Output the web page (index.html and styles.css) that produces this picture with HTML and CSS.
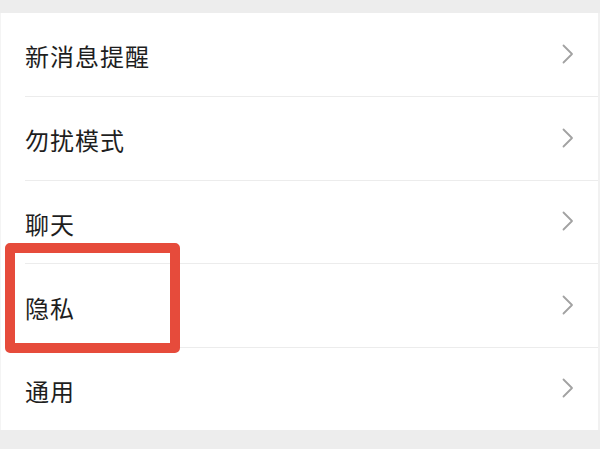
FILE: index.html
```html
<!DOCTYPE html>
<html lang="zh">
<head>
<meta charset="utf-8">
<link rel="stylesheet" href="styles.css">
</head>
<body>
<div class="page">
  <div class="list">
    <div class="row"><span class="label">新消息提醒</span><svg class="chev" viewBox="0 0 12 20"><path d="M1.5 1.5 L10 10 L1.5 18.5"/></svg></div>
    <div class="row"><span class="label">勿扰模式</span><svg class="chev" viewBox="0 0 12 20"><path d="M1.5 1.5 L10 10 L1.5 18.5"/></svg></div>
    <div class="row"><span class="label">聊天</span><svg class="chev" viewBox="0 0 12 20"><path d="M1.5 1.5 L10 10 L1.5 18.5"/></svg></div>
    <div class="row"><span class="label">隐私</span><svg class="chev" viewBox="0 0 12 20"><path d="M1.5 1.5 L10 10 L1.5 18.5"/></svg></div>
    <div class="row last"><span class="label">通用</span><svg class="chev" viewBox="0 0 12 20"><path d="M1.5 1.5 L10 10 L1.5 18.5"/></svg></div>
  </div>
  <div class="highlight"></div>
</div>
</body>
</html>
```
FILE: styles.css
```css
html, body {
  margin: 0;
  padding: 0;
}
body {
  background: #ededed;
  width: 600px;
  height: 449px;
  overflow: hidden;
  font-family: "Noto Sans CJK SC", "Noto Sans", sans-serif;
}
.page {
  position: relative;
  padding-top: 13px;
}
.list {
  background: #ffffff;
  border-right: 2px solid #f1f1f1;
  border-left: 1px solid #f4f4f4;
}
.row {
  height: 83.8px;
  box-sizing: border-box;
  display: flex;
  align-items: center;
  justify-content: space-between;
  padding: 3px 24px 0 24px;
  position: relative;
}
.row.last {
  height: 82px;
}
.row::after {
  content: "";
  position: absolute;
  left: 24px;
  right: 0;
  bottom: 0;
  height: 1px;
  background: #ececec;
}
.row.last::after {
  display: none;
}
.label {
  font-size: 24px;
  color: #1e1e1e;
  line-height: 1;
  letter-spacing: 1px;
}
.chev {
  width: 12px;
  height: 20px;
  margin-top: -5px;
  fill: none;
  stroke: #a2a2a2;
  stroke-width: 1.8;
  stroke-linecap: round;
  stroke-linejoin: round;
}
.highlight {
  position: absolute;
  left: 5px;
  top: 243px;
  width: 175px;
  height: 110px;
  box-sizing: border-box;
  border: 10px solid #e64b3b;
  border-radius: 5px;
}
```
